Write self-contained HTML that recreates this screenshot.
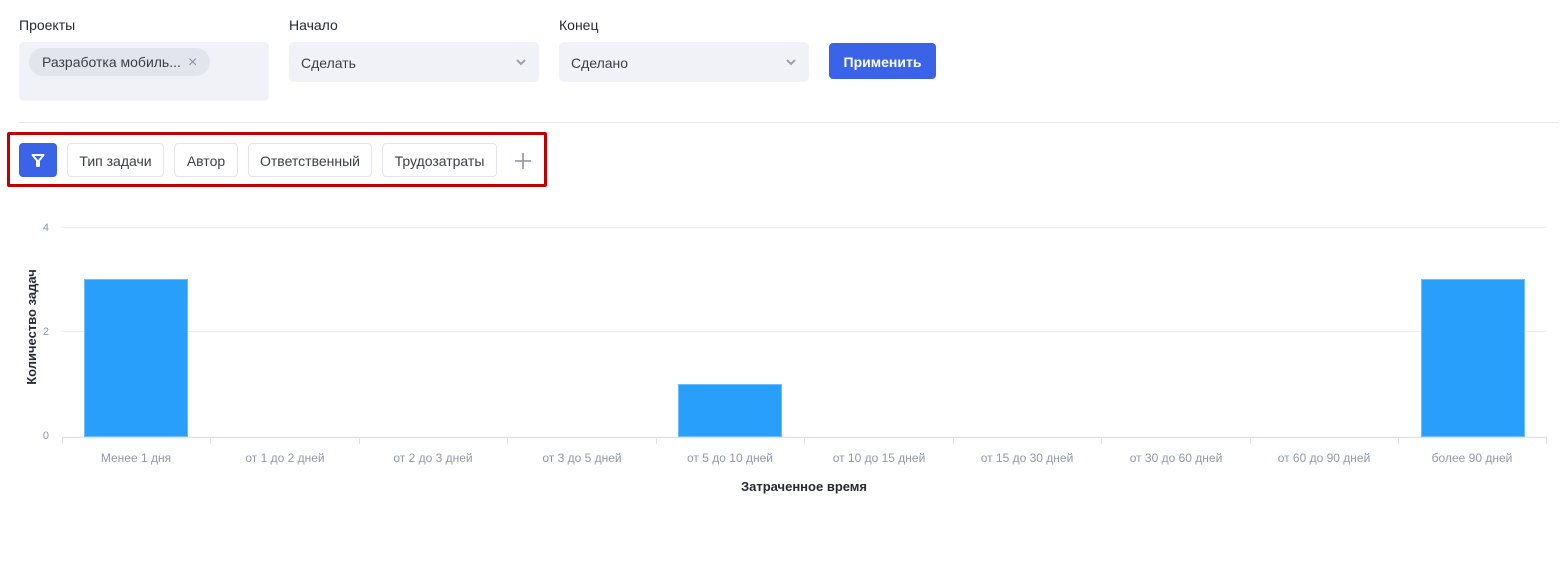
<!DOCTYPE html>
<html><head><meta charset="utf-8"><style>
*{box-sizing:border-box;margin:0;padding:0}
body{width:1564px;height:562px;background:#fff;font-family:"Liberation Sans",sans-serif;position:relative;overflow:hidden;color:#262a33}
.abs{position:absolute}
.lbl{font-size:14px;color:#262a33;top:17px}
.box{background:#f1f2f7;border-radius:5px}
.sel{top:42px;height:40px;width:250px;font-size:14px;color:#3a3e47;padding:13px 12px;}
.chev{position:absolute;right:13px;top:16px}
.btn{top:43px;left:829px;width:107px;height:36px;background:#3a63e8;border-radius:4px;color:#fff;font-weight:bold;font-size:14px;text-align:center;line-height:38px}
.chip{top:143px;height:34px;border:1px solid #e3e5ec;border-radius:4px;font-size:14px;color:#3a3e47;text-align:center;line-height:34px;background:#fff}
</style></head><body>
<div class="abs lbl" style="left:19px">Проекты</div>
<div class="abs lbl" style="left:289px">Начало</div>
<div class="abs lbl" style="left:559px">Конец</div>
<div class="abs box" style="left:19px;top:42px;width:250px;height:59px"></div>
<div class="abs" style="left:29px;top:48px;width:181px;height:28px;border-radius:14px;background:#e2e5ee;font-size:14px;color:#3a3e47;line-height:29px;padding-left:13px">Разработка мобиль...<span style="position:absolute;left:159px;color:#8b92a3;font-size:16px">×</span></div>
<div class="abs box sel" style="left:289px">Сделать<svg class="chev" width="10" height="8" viewBox="0 0 10 8"><path d="M1 2l4 4 4-4" fill="none" stroke="#9aa0ad" stroke-width="2"/></svg></div>
<div class="abs box sel" style="left:559px">Сделано<svg class="chev" width="10" height="8" viewBox="0 0 10 8"><path d="M1 2l4 4 4-4" fill="none" stroke="#9aa0ad" stroke-width="2"/></svg></div>
<div class="abs btn">Применить</div>
<div class="abs" style="left:19px;top:122px;width:1540px;height:1px;background:#e6e8ee"></div>
<div class="abs" style="left:7px;top:132px;width:540px;height:55px;border:3px solid #c00000;border-radius:2px"></div>
<div class="abs" style="left:19px;top:143px;width:38px;height:34px;background:#3a63e8;border-radius:4px"><svg width="38" height="34" viewBox="0 0 38 34"><path d="M13.5 12h11l-4.5 5.5v5.5h-2v-5.5z" fill="none" stroke="#fff" stroke-width="2" stroke-linejoin="round"/></svg></div>
<div class="abs chip" style="left:67px;width:97px">Тип задачи</div>
<div class="abs chip" style="left:174px;width:64px">Автор</div>
<div class="abs chip" style="left:248px;width:124px">Ответственный</div>
<div class="abs chip" style="left:382px;width:115px">Трудозатраты</div>
<svg class="abs" style="left:513px;top:151px" width="20" height="20" viewBox="0 0 20 20"><path d="M10 2v16M2 10h16" stroke="#8b92a3" stroke-width="1.6"/></svg>
<svg class="abs" style="left:0;top:0" width="1564" height="562" font-family="Liberation Sans, sans-serif">
<g stroke="#eceef3" stroke-width="1"><line x1="62" y1="227.5" x2="1547" y2="227.5"/><line x1="62" y1="331.5" x2="1547" y2="331.5"/></g>
<line x1="62" y1="437.5" x2="1547" y2="437.5" stroke="#dfe2ea" stroke-width="1.5"/>
<g stroke="#dfe2ea"><line x1="62.5" y1="437" x2="62.5" y2="444"/><line x1="210.5" y1="437" x2="210.5" y2="444"/><line x1="359.5" y1="437" x2="359.5" y2="444"/><line x1="507.5" y1="437" x2="507.5" y2="444"/><line x1="656.5" y1="437" x2="656.5" y2="444"/><line x1="804.5" y1="437" x2="804.5" y2="444"/><line x1="953.5" y1="437" x2="953.5" y2="444"/><line x1="1101.5" y1="437" x2="1101.5" y2="444"/><line x1="1250.5" y1="437" x2="1250.5" y2="444"/><line x1="1398.5" y1="437" x2="1398.5" y2="444"/><line x1="1546.5" y1="437" x2="1546.5" y2="444"/></g>
<g fill="#8f97ab" font-size="11"><text x="49" y="231" text-anchor="end">4</text><text x="49" y="335" text-anchor="end">2</text><text x="49" y="439" text-anchor="end">0</text></g>
<g fill="#289ffb" stroke="#6fbdfb" stroke-width="1"><rect x="84.5" y="279.5" width="103" height="157"/><rect x="678.5" y="384.5" width="103" height="52"/><rect x="1421.5" y="279.5" width="103" height="157"/></g>
<g fill="#8f97ab" font-size="12" text-anchor="middle"><text x="136" y="462">Менее 1 дня</text><text x="285" y="462">от 1 до 2 дней</text><text x="433" y="462">от 2 до 3 дней</text><text x="582" y="462">от 3 до 5 дней</text><text x="730" y="462">от 5 до 10 дней</text><text x="879" y="462">от 10 до 15 дней</text><text x="1027" y="462">от 15 до 30 дней</text><text x="1176" y="462">от 30 до 60 дней</text><text x="1324" y="462">от 60 до 90 дней</text><text x="1472" y="462">более 90 дней</text></g>
<text x="804" y="491" text-anchor="middle" font-size="13" font-weight="bold" fill="#262a33">Затраченное время</text>
<text transform="translate(36,327) rotate(-90)" text-anchor="middle" font-size="13" font-weight="bold" fill="#262a33">Количество задач</text>
</svg>
</body></html>
